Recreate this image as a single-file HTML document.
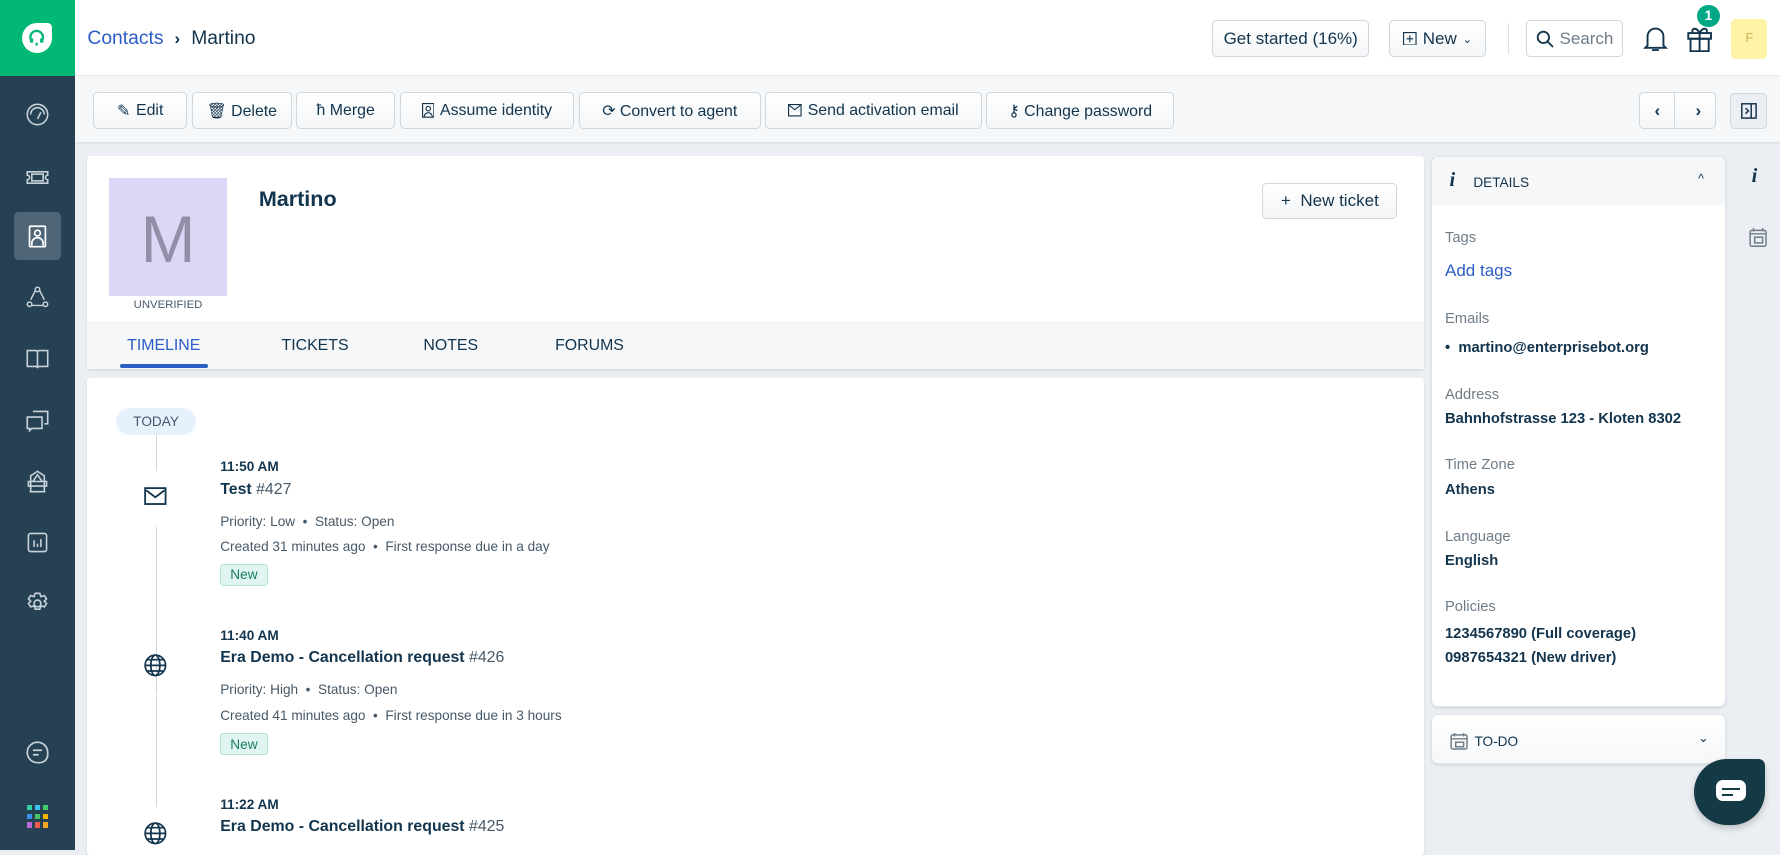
<!DOCTYPE html>
<html><head><meta charset="utf-8"><style>
html{zoom:1.13520}
*{box-sizing:border-box;margin:0;padding:0}
body{width:1568px;height:749px;overflow:hidden;background:#ebeff3;font-family:"Liberation Sans",sans-serif;color:#12344d;position:relative;font-size:13px}
.abs{position:absolute}
.side{left:0;top:0;width:66px;height:749px;background:#264153}
.logo{left:0;top:0;width:66px;height:67px;background:#02b875}
.si{position:absolute;left:22px;width:22px;height:22px}
.top{left:66px;top:0;width:1502px;height:67px;background:#fff;border-bottom:1px solid #e6e9ee}
.btn{position:absolute;height:33px;border:1px solid #cfd7df;border-radius:4px;background:linear-gradient(#fff,#f3f5f7);font-size:14px;color:#12344d;display:flex;align-items:center;justify-content:center;gap:5px}
.tool{left:66px;top:67px;width:1502px;height:59px;background:#f5f7f9;border-bottom:1px solid #dde2e8;box-shadow:0 1px 2px rgba(0,0,0,.05)}
.card{background:#fff;border-radius:3px;box-shadow:0 1px 2px rgba(0,0,0,.1)}
.lbl{font-size:13px;color:#6f7c87;position:absolute;left:11px}
.val{font-size:13px;color:#12344d;font-weight:bold;position:absolute;left:11px}
.ti{position:absolute;left:117px}
.tm{font-size:12px;font-weight:bold}
.tt{font-size:14px;font-weight:bold}
.tt span{font-weight:normal;color:#475867}
.mt{font-size:12px;color:#475867}
.new{display:inline-block;background:#e0f5f1;border:1px solid #b4e5da;color:#1a7a61;font-size:12px;padding:2px 8px;border-radius:3px}
svg{display:block}
</style></head><body>
<div class="abs side"></div>
<div class="abs logo"><div class="abs" style="left:19px;top:20px;width:27px;height:27px;background:#fff;border-radius:50% 50% 50% 50%/50% 50% 50% 50%;border-top-right-radius:4px"></div>
<svg class="abs" style="left:24px;top:25px" width="17" height="17" viewBox="0 0 17 17"><path d="M3 10V8a5.5 5.5 0 0 1 11 0v2" fill="none" stroke="#02b875" stroke-width="2"/><rect x="2.5" y="9" width="3" height="4" rx="1" fill="#02b875"/><rect x="11.5" y="9" width="3" height="4" rx="1" fill="#02b875"/><path d="M8.5 13v2.5" stroke="#02b875" stroke-width="2"/></svg></div>
<div class="abs" style="left:12px;top:187px;width:42px;height:42px;background:#4d6577;border-radius:4px"></div>
<svg class="si" style="top:90px" viewBox="0 0 22 22" fill="none" stroke="#c8d2da" stroke-width="1.4"><circle cx="11" cy="11" r="9"/><path d="M5 11a6 6 0 0 1 12 0M11 15l3-6"/></svg>
<svg class="si" style="top:145px" viewBox="0 0 22 22" fill="none" stroke="#c8d2da" stroke-width="1.4"><path d="M2 6h18v3a2 2 0 0 0 0 4v3H2v-3a2 2 0 0 0 0-4z"/><rect x="6" y="8" width="10" height="6"/></svg>
<svg class="si" style="top:197px" viewBox="0 0 22 22" fill="none" stroke="#fff" stroke-width="1.5"><rect x="4" y="2" width="14" height="18" rx="1"/><circle cx="11" cy="8" r="2.5"/><path d="M6 19v-2a5 5 0 0 1 10 0v2"/></svg>
<svg class="si" style="top:251px" viewBox="0 0 22 22" fill="none" stroke="#c8d2da" stroke-width="1.3"><circle cx="11" cy="4" r="2"/><circle cx="4" cy="17" r="2"/><circle cx="18" cy="17" r="2"/><path d="M9 5l-4 8M13 5l4 8M6 18h10"/></svg>
<svg class="si" style="top:305px" viewBox="0 0 22 22" fill="none" stroke="#c8d2da" stroke-width="1.4"><path d="M2 4h8l1 1 1-1h8v14h-8l-1 1-1-1H2zM11 5v13"/></svg>
<svg class="si" style="top:359px" viewBox="0 0 22 22" fill="none" stroke="#c8d2da" stroke-width="1.4"><path d="M7 3h13v11h-3M2 8h13v10H6l-2 2v-2H2z"/></svg>
<svg class="si" style="top:413px" viewBox="0 0 22 22" fill="none" stroke="#c8d2da" stroke-width="1.4"><path d="M4 20h14M5 20V6l6-4 6 4v14M3 11h16v4H3zM7 11l4-6 4 6"/></svg>
<svg class="si" style="top:467px" viewBox="0 0 22 22" fill="none" stroke="#c8d2da" stroke-width="1.4"><rect x="3" y="3" width="16" height="16" rx="2"/><path d="M8 15V9M11 15v-3M14 15V8"/></svg>
<svg class="si" style="top:521px" viewBox="0 0 22 22" fill="none" stroke="#c8d2da" stroke-width="1.4"><circle cx="11" cy="11" r="3"/><path d="M9 2h4l1 3 3-1 2 3-2 2 2 2-2 3-3-1-1 3H9l-1-3-3 1-2-3 2-2-2-2 2-3 3 1z"/></svg>
<svg class="si" style="top:652px" viewBox="0 0 22 22" fill="none" stroke="#c8d2da" stroke-width="1.5"><path d="M11 2a9 9 0 0 1 9 9v2a7 7 0 0 1-7 7h-2a9 9 0 0 1 0-18z"/><path d="M7 9h8M7 13h5"/></svg>
<div class="abs" style="left:24px;top:709px;width:20px;height:20px;display:grid;grid-template-columns:repeat(3,4px);gap:3px">
<i style="background:#2fd0a3"></i><i style="background:#3bc4f2"></i><i style="background:#43c86b"></i><i style="background:#3b8eea"></i><i style="background:#47c45f"></i><i style="background:#f4b400"></i><i style="background:#b86bd6"></i><i style="background:#f05a4a"></i><i style="background:#f6a623"></i></div>

<div class="abs top"></div>
<div class="abs" style="left:77px;top:25px;font-size:17px"><span style="color:#2c5cc5">Contacts</span> <b style="font-size:15px;margin:0 5px">›</b> Martino</div>
<div class="btn" style="left:1068px;top:18px;width:138px;height:32px;font-size:15px">Get started (16%)</div>
<div class="btn" style="left:1224px;top:18px;width:85px;height:32px;font-size:15px"><svg width="12" height="12" viewBox="0 0 12 12" fill="none" stroke="#12344d"><rect x=".5" y=".5" width="11" height="11"/><path d="M6 3v6M3 6h6"/></svg>New <span style="font-size:10px">⌄</span></div>
<div class="abs" style="left:1328px;top:20px;width:1px;height:28px;background:#dde2e8"></div>
<div class="btn" style="left:1344px;top:18px;width:86px;height:32px;background:#fff;color:#6f7c87;font-size:15px"><svg width="16" height="16" viewBox="0 0 16 16" fill="none" stroke="#12344d" stroke-width="1.6"><circle cx="6.5" cy="6.5" r="5"/><path d="M10 10l5 5"/></svg>Search</div>
<svg class="abs" style="left:1447px;top:21px" width="22" height="26" viewBox="0 0 22 26" fill="none" stroke="#12344d" stroke-width="1.7"><path d="M4 19V11a7 7 0 0 1 14 0v8l2 2H2zM8 23h6"/></svg>
<svg class="abs" style="left:1485px;top:21px" width="24" height="25" viewBox="0 0 24 25" fill="none" stroke="#12344d" stroke-width="1.7"><rect x="2" y="8" width="20" height="5"/><rect x="4" y="13" width="16" height="11"/><path d="M12 8v16M12 8c-3-6-8-4-6 0M12 8c3-6 8-4 6 0"/></svg>
<div class="abs" style="left:1495px;top:4px;width:20px;height:20px;border-radius:50%;background:#00a886;color:#fff;font-weight:bold;font-size:12px;text-align:center;line-height:20px">1</div>
<div class="abs" style="left:1525px;top:17px;width:32px;height:35px;background:#fdf2a6;border-radius:4px;color:#c5b35a;font-size:11px;text-align:center;line-height:35px">F</div>

<div class="abs tool"></div>
<div class="btn" style="left:82px;top:81px;width:83px">✎ <span>Edit</span></div>
<div class="btn" style="left:169px;top:81px;width:88px">🗑 Delete</div>
<div class="btn" style="left:261px;top:81px;width:87px">ħ Merge</div>
<div class="btn" style="left:352px;top:81px;width:154px"><svg width="11" height="13" viewBox="0 0 11 13" fill="none" stroke="#12344d"><rect x=".5" y=".5" width="10" height="12"/><circle cx="5.5" cy="5" r="2"/><path d="M2 12a3.5 3.5 0 0 1 7 0"/></svg>Assume identity</div>
<div class="btn" style="left:510px;top:81px;width:160px">⟳ Convert to agent</div>
<div class="btn" style="left:674px;top:81px;width:191px"><svg width="12" height="11" viewBox="0 0 12 11" fill="none" stroke="#12344d"><rect x=".5" y=".5" width="11" height="10"/><path d="M1 1l5 4 5-4"/></svg>Send activation email</div>
<div class="btn" style="left:869px;top:81px;width:165px">⚷ Change password</div>
<div class="btn" style="left:1444px;top:81px;width:68px;padding:0"><span style="flex:1;text-align:center;font-weight:bold;font-size:15px;border-right:1px solid #cfd7df;line-height:31px">‹</span><span style="flex:1;text-align:center;font-weight:bold;font-size:15px;line-height:31px">›</span></div>
<div class="btn" style="left:1524px;top:82px;width:33px;height:32px;background:#ebeff3"><svg width="14" height="14" viewBox="0 0 14 14" fill="none" stroke="#12344d" stroke-width="1.3"><rect x=".7" y=".7" width="12.6" height="12.6"/><path d="M9 1v12M4 4.5l2.5 2.5L4 9.5"/></svg></div>

<div class="abs card" style="left:77px;top:137px;width:1177px;height:188px">
<div class="abs" style="left:19px;top:20px;width:104px;height:104px;background:#dcd7f6;color:#938fa8;font-size:58px;text-align:center;line-height:108px">M</div>
<div class="abs" style="left:19px;top:126px;width:104px;text-align:center;font-size:10px;color:#475867">UNVERIFIED</div>
<div class="abs" style="left:151px;top:27px;font-size:19px;font-weight:bold;font-weight:600">Martino</div>
<div class="btn" style="left:1035px;top:24px;width:119px;height:32px;font-size:15px">+&nbsp; New ticket</div>
<div class="abs" style="left:0;top:146px;width:1177px;height:42px;background:#f5f7f9;font-size:14px;color:#12344d">
<div class="abs" style="left:35px;top:14px;color:#2c5cc5">TIMELINE</div>
<div class="abs" style="left:29px;top:38px;width:77px;height:3px;background:#2c5cc5;border-radius:2px"></div>
<div class="abs" style="left:171px;top:14px">TICKETS</div>
<div class="abs" style="left:296px;top:14px">NOTES</div>
<div class="abs" style="left:412px;top:14px">FORUMS</div>
</div></div>

<div class="abs card" style="left:77px;top:333px;width:1177px;height:420px">
<div class="abs" style="left:25px;top:26px;width:71px;height:24px;border-radius:12px;background:#e5f2fd;font-size:12px;color:#475867;text-align:center;line-height:24px">TODAY</div>
<div class="abs" style="left:60px;top:50px;width:1px;height:32px;background:#cfd7df"></div>
<div class="abs" style="left:60px;top:131px;width:1px;height:148px;background:#cfd7df"></div>
<div class="abs" style="left:60px;top:280px;width:1px;height:98px;background:#cfd7df"></div>
<svg class="abs" style="left:50px;top:96px" width="20" height="16" viewBox="0 0 20 16" fill="none" stroke="#12344d" stroke-width="1.6"><rect x="1" y="1" width="18" height="14"/><path d="M2 3l8 6 8-6"/></svg>
<svg class="abs" style="left:50px;top:243px" width="20" height="20" viewBox="0 0 20 20" fill="none" stroke="#12344d" stroke-width="1.5"><circle cx="10" cy="10" r="9"/><ellipse cx="10" cy="10" rx="4" ry="9"/><path d="M1 10h18M3 5h14M3 15h14"/></svg>
<svg class="abs" style="left:50px;top:391px" width="20" height="20" viewBox="0 0 20 20" fill="none" stroke="#12344d" stroke-width="1.5"><circle cx="10" cy="10" r="9"/><ellipse cx="10" cy="10" rx="4" ry="9"/><path d="M1 10h18M3 5h14M3 15h14"/></svg>
<div class="ti tm" style="top:71px">11:50 AM</div>
<div class="ti tt" style="top:91px">Test <span>#427</span></div>
<div class="ti mt" style="top:120px">Priority: Low &nbsp;•&nbsp; Status: Open</div>
<div class="ti mt" style="top:142px">Created 31 minutes ago &nbsp;•&nbsp; First response due in a day</div>
<div class="ti" style="top:164px"><span class="new">New</span></div>
<div class="ti tm" style="top:220px">11:40 AM</div>
<div class="ti tt" style="top:239px">Era Demo - Cancellation request <span>#426</span></div>
<div class="ti mt" style="top:268px">Priority: High &nbsp;•&nbsp; Status: Open</div>
<div class="ti mt" style="top:291px">Created 41 minutes ago &nbsp;•&nbsp; First response due in 3 hours</div>
<div class="ti" style="top:313px"><span class="new">New</span></div>
<div class="ti tm" style="top:369px">11:22 AM</div>
<div class="ti tt" style="top:388px">Era Demo - Cancellation request <span>#425</span></div>
</div>

<div class="abs card" style="left:1261px;top:137px;width:259px;height:486px;border:1px solid #e0e5ea;border-radius:6px;overflow:hidden">
<div class="abs" style="left:0;top:0;width:259px;height:43px;background:#f5f7f9"></div>
<div class="abs" style="left:15px;top:11px;font-family:'Liberation Serif',serif;font-style:italic;font-weight:bold;font-size:18px">i</div>
<div class="abs" style="left:36px;top:16px;font-size:12px">DETAILS</div>
<div class="abs" style="left:234px;top:14px;font-size:11px">^</div>
<div class="lbl" style="top:65px">Tags</div>
<div class="abs" style="left:11px;top:92px;font-size:15px;color:#2c5cc5">Add tags</div>
<div class="lbl" style="top:136px">Emails</div>
<div class="abs" style="left:11px;top:162px;font-size:13px;font-weight:600">•&nbsp; martino@enterprisebot.org</div>
<div class="lbl" style="top:203px">Address</div>
<div class="val" style="top:224px">Bahnhofstrasse 123 - Kloten 8302</div>
<div class="lbl" style="top:265px">Time Zone</div>
<div class="val" style="top:287px">Athens</div>
<div class="lbl" style="top:328px">Language</div>
<div class="val" style="top:349px">English</div>
<div class="lbl" style="top:390px">Policies</div>
<div class="abs" style="left:11px;top:411px;font-size:13px;font-weight:600;line-height:21px">1234567890 (Full coverage)<br>0987654321 (New driver)</div>
</div>
<div class="abs card" style="left:1261px;top:629px;width:259px;height:44px;border:1px solid #e0e5ea;border-radius:6px;background:linear-gradient(#fff,#f5f7f9)">
<svg class="abs" style="left:15px;top:15px" width="16" height="16" viewBox="0 0 16 16" fill="none" stroke="#6f7c87" stroke-width="1.3"><rect x="1" y="2.5" width="14" height="12.5" rx="1.5"/><path d="M4 1v3M12 1v3M1 6h14"/><rect x="5" y="9" width="7" height="4"/></svg>
<div class="abs" style="left:37px;top:17px;font-size:12px">TO-DO</div>
<div class="abs" style="left:234px;top:13px;font-size:11px">⌄</div>
</div>
<div class="abs" style="left:1543px;top:145px;font-family:'Liberation Serif',serif;font-style:italic;font-weight:bold;font-size:18px">i</div>
<svg class="abs" style="left:1541px;top:200px" width="16" height="18" viewBox="0 0 16 18" fill="none" stroke="#6f7c87" stroke-width="1.3"><rect x="1" y="3" width="14" height="14" rx="1.5"/><path d="M4 1v3M12 1v3M1 6h14"/><rect x="5" y="9" width="7" height="5"/></svg>
<div class="abs" style="left:1492px;top:669px;width:63px;height:58px;background:#133a45;border-radius:30px 6px 30px 30px;box-shadow:0 3px 6px rgba(0,0,0,.2)"></div>
<div class="abs" style="left:1512px;top:687px;width:26px;height:19px;background:#fff;border-radius:6px"></div>
<div class="abs" style="left:1517px;top:694px;width:16px;height:2px;background:#133a45"></div>
<div class="abs" style="left:1517px;top:699px;width:10px;height:2px;background:#133a45"></div>
</body></html>
